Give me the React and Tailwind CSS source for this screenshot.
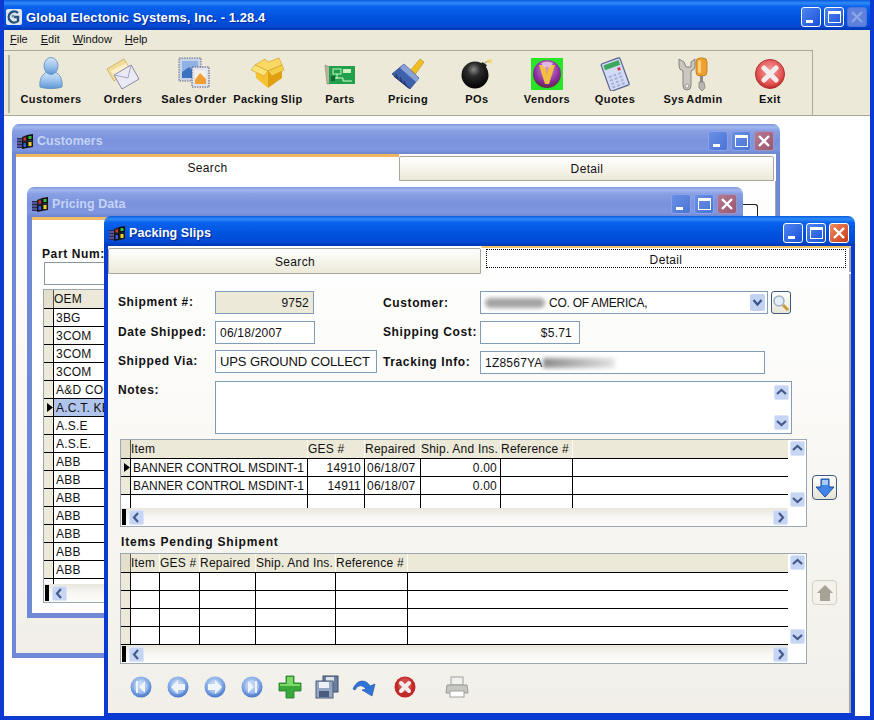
import React from "react";

const ui = "font-['Liberation_Sans',Arial,sans-serif]";

const NavBall = ({ children }) => (
  <svg width="22" height="22" viewBox="0 0 22 22">
    <defs>
      <radialGradient id="navball" cx="45%" cy="35%" r="70%">
        <stop offset="0%" stopColor="#c4d8f5" />
        <stop offset="60%" stopColor="#7ea6e4" />
        <stop offset="100%" stopColor="#3a6cc4" />
      </radialGradient>
    </defs>
    <circle cx="11" cy="11" r="10.5" fill="url(#navball)" />
    <circle cx="11" cy="11" r="7" fill="#dbe6f8" opacity="0.35" />
    {children}
  </svg>
);

const AppIcon = () => (
  <svg width="16" height="16" viewBox="0 0 16 16">
    <rect width="16" height="16" rx="2" fill="#dfe6ee" />
    <path d="M12 4 A5.5 5.5 0 1 0 12 12 L12 8 L8 8" fill="none" stroke="#23507e" strokeWidth="2.4" />
    <circle cx="7" cy="7" r="1.6" fill="#7d95ad" />
  </svg>
);

const WinIcon = () => (
  <svg width="17" height="16" viewBox="0 0 17 16">
    <rect x="0" y="4" width="6" height="10" fill="#2a2a52" />
    <path d="M0 6h6M0 9h6M0 12h6" stroke="#7d80e0" strokeWidth="1" />
    <path d="M5 3 L10 1 L10 7 L5 8 Z" fill="#1c1c1c" />
    <path d="M10 1 L16 0 L16 6 L10 7 Z" fill="#111" />
    <path d="M5 8 L10 7 L10 14 L5 15 Z" fill="#111" />
    <path d="M10 7 L16 6 L16 13 L10 14 Z" fill="#1c1c1c" />
    <rect x="6.5" y="3.5" width="2.5" height="3" fill="#d83030" />
    <rect x="11.5" y="2" width="3" height="3" fill="#30c040" />
    <rect x="6.5" y="9" width="2.5" height="4" fill="#3060e0" />
    <rect x="11.5" y="8" width="3" height="4" fill="#f0d030" />
  </svg>
);

const CustomersIcon = () => (
  <svg width="34" height="34" viewBox="0 0 34 34">
    <defs>
      <linearGradient id="person" x1="0" y1="0" x2="0" y2="1">
        <stop offset="0%" stopColor="#d6e6f8" />
        <stop offset="55%" stopColor="#97c0ea" />
        <stop offset="100%" stopColor="#5f96d4" />
      </linearGradient>
    </defs>
    <path d="M6 30 C5 23 8 17 13 15 L21 15 C26 17 29 23 28 30 C22 32 12 32 6 30 Z" fill="url(#person)" stroke="#5c8cc0" strokeWidth="0.8" />
    <ellipse cx="17" cy="9" rx="7" ry="8.5" fill="url(#person)" stroke="#5c8cc0" strokeWidth="0.8" />
  </svg>
);

const OrdersIcon = () => (
  <svg width="34" height="34" viewBox="0 0 34 34">
    <path d="M1 12 L18 2 L24 12 L8 24 Z" fill="#f3dc9a" stroke="#c8a85a" strokeWidth="0.8" />
    <path d="M5 14 L20 6 L25 14 L11 24 Z" fill="#fbf0c8" />
    <path d="M8 18 L25 8 L33 22 L16 32 Z" fill="#eaeaf4" stroke="#8a88ac" strokeWidth="1" />
    <path d="M8 18 L22 21 L25 8" fill="none" stroke="#a4a2c0" strokeWidth="1" />
  </svg>
);

const SalesIcon = () => (
  <svg width="34" height="34" viewBox="0 0 34 34">
    <rect x="2" y="1" width="22" height="23" fill="#c8d4e6" stroke="#6a6a86" strokeWidth="1" strokeDasharray="1.5 1" />
    <rect x="5" y="4" width="16" height="17" fill="#8fb2e4" />
    <path d="M5 15 L12 10 L21 18 L21 21 L5 21 Z" fill="#3a72c0" />
    <rect x="15" y="10" width="17" height="20" fill="#dfe4ee" stroke="#55557a" strokeWidth="1" strokeDasharray="1.5 1" />
    <rect x="18" y="13" width="11" height="14" fill="#f2f0e6" />
    <path d="M18 23 L23 16 L29 22 L29 27 L18 27 Z" fill="#f0a030" />
  </svg>
);

const PackingIcon = () => (
  <svg width="34" height="34" viewBox="0 0 34 34">
    <path d="M17 14 L31 8 L31 21 L17 31 Z" fill="#e0a010" />
    <path d="M17 14 L4 8 L5 21 L17 31 Z" fill="#f4c232" />
    <path d="M4 8 L14 2 L17 5 L28 1 L31 8 L17 14 Z" fill="#fad864" stroke="#cf9a1a" strokeWidth="0.6" />
    <path d="M4 8 L0 13 L13 19 L17 14 Z" fill="#fde27a" stroke="#cf9a1a" strokeWidth="0.6" />
    <path d="M31 8 L33 13 L21 19 L17 14 Z" fill="#f6cf4a" stroke="#cf9a1a" strokeWidth="0.6" />
  </svg>
);

const PartsIcon = () => (
  <svg width="34" height="34" viewBox="0 0 34 34">
    <path d="M2 8 L4 27 L7 27 L7 10 Z" fill="#b8b4a0" stroke="#7a7660" strokeWidth="0.5" />
    <rect x="6" y="9" width="26" height="18" fill="#21a04c" />
    <rect x="10" y="12" width="8" height="5" fill="none" stroke="#c8f0c0" strokeWidth="1" />
    <rect x="20" y="12" width="8" height="4" fill="#c8f0c0" />
    <path d="M9 21 H20 V24 H29 M14 17 V22" stroke="#d8f8d0" strokeWidth="1" fill="none" />
    <rect x="8" y="19" width="4" height="5" fill="#0d6a30" />
  </svg>
);

const PricingIcon = () => (
  <svg width="34" height="34" viewBox="0 0 34 34">
    <path d="M18 15 L29 2 L33 5 L23 19 Z" fill="#f0c020" stroke="#b88a10" strokeWidth="0.6" />
    <path d="M13 7 L28 21 L19 32 L1 17 Z" fill="#3f60ac" stroke="#2e4788" strokeWidth="0.8" />
    <path d="M13 7 L28 21 L25 25 L9 11 Z" fill="#8ba2d6" />
    <path d="M3 19 L18 31 M5 17 L7 22 M9 20 L11 25 M13 24 L15 29" stroke="#22386e" strokeWidth="1.2" />
  </svg>
);

const BombIcon = () => (
  <svg width="34" height="34" viewBox="0 0 34 34">
    <defs>
      <radialGradient id="bomb" cx="45%" cy="30%" r="70%">
        <stop offset="0%" stopColor="#8a8a8a" />
        <stop offset="35%" stopColor="#2c2c2c" />
        <stop offset="100%" stopColor="#000" />
      </radialGradient>
    </defs>
    <path d="M23 8 Q26 4 30 4" stroke="#c9b98a" strokeWidth="1.6" fill="none" />
    <path d="M30 1 L31 3 L33 3 L31 5 L32 7 L30 6 L28 6 L29 4 Z" fill="#f2d860" />
    <rect x="20" y="6" width="6" height="6" rx="1" transform="rotate(35 23 9)" fill="#222" />
    <circle cx="15" cy="18" r="13.5" fill="url(#bomb)" />
  </svg>
);

const VendorsIcon = () => (
  <svg width="34" height="34" viewBox="0 0 34 34">
    <defs>
      <radialGradient id="vend" cx="50%" cy="35%" r="65%">
        <stop offset="0%" stopColor="#d894d8" />
        <stop offset="70%" stopColor="#8a2a9c" />
        <stop offset="100%" stopColor="#5c2f40" />
      </radialGradient>
    </defs>
    <rect x="1" y="1" width="32" height="32" fill="#26e626" />
    <circle cx="17" cy="17" r="14" fill="url(#vend)" />
    <path d="M9 8 L15 8 L17 17 L19 8 L25 8 L19 27 L15 27 Z" fill="#f2c040" />
    <path d="M11 6 Q17 3 23 6 L20 11 Q17 9 14 11 Z" fill="#e6c4ea" opacity="0.85" />
  </svg>
);

const QuotesIcon = () => (
  <svg width="34" height="34" viewBox="0 0 34 34">
    <g transform="rotate(-20 17 17)">
      <rect x="7" y="3" width="20" height="29" rx="1.5" fill="#d2daf4" stroke="#55628e" strokeWidth="1.2" />
      <rect x="9" y="5" width="16" height="5" fill="#3ca85c" />
      <rect x="21" y="12" width="3" height="3" fill="#d83848" />
      {[0, 1, 2, 3].map((r) =>
        [0, 1, 2].map((c) => (
          <rect key={r + "-" + c} x={10 + c * 5} y={17 + r * 3.6} width="3" height="2" fill="#a4b0dc" />
        ))
      )}
    </g>
  </svg>
);

const SysAdminIcon = () => (
  <svg width="34" height="34" viewBox="0 0 34 34">
    <path d="M3 2 L3 9 Q3 13 7 14 L7 29 Q7 33 11 33 Q15 33 15 29 L15 14 Q19 13 19 9 L19 2 L15 5 L15 10 L10 10 L8 5 Z" fill="#c9c7c0" stroke="#7c7a74" strokeWidth="0.9" />
    <circle cx="11" cy="29" r="2" fill="#f2f0e8" stroke="#7c7a74" strokeWidth="0.7" />
    <rect x="20" y="1" width="11" height="18" rx="4" fill="#f0a030" stroke="#b87818" strokeWidth="0.8" />
    <rect x="22" y="3" width="3" height="13" rx="1.5" fill="#f8d080" />
    <rect x="24" y="19" width="3" height="6" fill="#8c8c8c" />
    <path d="M23 25 H28 L29 31 L26 34 L23 31 Z" fill="#b8b6b0" stroke="#7c7a74" strokeWidth="0.7" />
  </svg>
);

const ExitIcon = () => (
  <svg width="34" height="34" viewBox="0 0 34 34">
    <defs>
      <radialGradient id="exitball" cx="50%" cy="40%" r="60%">
        <stop offset="0%" stopColor="#f5a5a5" />
        <stop offset="75%" stopColor="#e45050" />
        <stop offset="100%" stopColor="#b82a2a" />
      </radialGradient>
    </defs>
    <circle cx="17" cy="17" r="14.5" fill="url(#exitball)" stroke="#b03030" strokeWidth="1" />
    <path d="M11 11 L23 23 M23 11 L11 23" stroke="#f4ecec" strokeWidth="5" strokeLinecap="round" />
  </svg>
);

const toolbar = [
  { label: "Customers", width: "w-[74px]", Icon: CustomersIcon },
  { label: "Orders", width: "w-[70px]", Icon: OrdersIcon },
  { label: "Sales Order", width: "w-[72px]", Icon: SalesIcon },
  { label: "Packing Slip", width: "w-[76px]", Icon: PackingIcon },
  { label: "Parts", width: "w-[68px]", Icon: PartsIcon },
  { label: "Pricing", width: "w-[68px]", Icon: PricingIcon },
  { label: "POs", width: "w-[70px]", Icon: BombIcon },
  { label: "Vendors", width: "w-[70px]", Icon: VendorsIcon },
  { label: "Quotes", width: "w-[66px]", Icon: QuotesIcon },
  { label: "Sys Admin", width: "w-[90px]", Icon: SysAdminIcon },
  { label: "Exit", width: "w-[64px]", Icon: ExitIcon },
];

const WinBtn = ({ kind, state }) => {
  const tone = {
    active: "border-white bg-gradient-to-br from-[#4f86f2] to-[#1a4fd6]",
    inactive: "border-[#8aa2e8] bg-gradient-to-br from-[#6a90e4] to-[#4a74d6]",
    activeClose: "border-white bg-gradient-to-br from-[#ee8a62] to-[#c9380f]",
    inactiveClose: "border-[#9f93c0] bg-gradient-to-br from-[#b57a92] to-[#9a5670]",
    disabledClose: "border-[#4f74dc] bg-[#5f80dc]",
  }[kind === "close" ? (state === "active" ? "activeClose" : state === "disabled" ? "disabledClose" : "inactiveClose") : state === "inactive" ? "inactive" : "active"];
  return (
    <div className={`relative flex h-[20px] w-[20px] items-center justify-center rounded-[3px] border ${tone}`}>
      {kind === "min" && <div className="absolute bottom-[3px] left-[4px] h-[3px] w-[7px] bg-white" />}
      {kind === "max" && <div className="h-[12px] w-[13px] border border-t-[3px] border-white" />}
      {kind === "close" && (
        <svg width="14" height="14" viewBox="0 0 14 14">
          <path d="M2 2 L12 12 M12 2 L2 12" stroke={state === "disabled" ? "#8da6e6" : "white"} strokeWidth="2.4" />
        </svg>
      )}
    </div>
  );
};

const TitleBar = ({ title, active, closeState, rounded = true, big, icon }) => (
  <div
    className={`flex h-[30px] shrink-0 items-center pt-[3px] ${rounded ? "rounded-t-[7px]" : ""} ${
      active
        ? "bg-[linear-gradient(180deg,#0a5ae0_0%,#2f8bf6_10%,#0a62ec_22%,#0053e0_55%,#004ad6_85%,#0038b4_100%)]"
        : "bg-[linear-gradient(180deg,#7e96dc_0%,#a2b7ee_10%,#8aa0e4_22%,#7a92dc_55%,#7f97e0_85%,#6d84d0_100%)]"
    }`}
  >
    <div className={big ? "ml-[6px] mr-[4px] flex" : "ml-[5px] mr-[3px] flex pt-[2px]"}>{icon || <WinIcon />}</div>
    <span
      className={`flex-1 pt-[2px] font-bold ${big ? "text-[13px] tracking-[0.08px]" : "text-[12.5px] tracking-[0.05px]"} ${
        active ? "text-white [text-shadow:1px_1px_1px_#0a2a90]" : "text-[#c5d4f6]"
      }`}
    >
      {title}
    </span>
    <div className={`flex gap-[3px] ${big ? "mr-[7px]" : "mr-[6px]"}`}>
      <WinBtn kind="min" state={active ? "active" : "inactive"} />
      <WinBtn kind="max" state={active ? "active" : "inactive"} />
      <WinBtn kind="close" state={closeState || (active ? "active" : "inactive")} />
    </div>
  </div>
);

const ScrollBtn = ({ dir }) => {
  const pts = {
    up: "3,9 7.5,5 12,9",
    down: "3,6 7.5,10 12,6",
    left: "9,3 5,7.5 9,12",
    right: "6,3 10,7.5 6,12",
  }[dir];
  return (
    <svg width="15" height="15" viewBox="0 0 15 15" className="block shrink-0">
      <rect x="0.5" y="0.5" width="14" height="14" rx="1.5" fill="#c6d5f4" stroke="#dbe5f8" />
      <polyline points={pts} fill="none" stroke="#44598c" strokeWidth="2.2" />
    </svg>
  );
};

const Cell = ({ width, last, right, className = "", children }) => (
  <div
    className={`${width} ${last ? "flex-1" : "shrink-0 border-r border-black"} ${
      right ? "pr-[3px] text-right" : "pl-[2px]"
    } overflow-hidden whitespace-nowrap leading-[18px] ${className}`}
  >
    {children}
  </div>
);

const Grid = ({ cols, header, rows, stub, width, pointer, selected, vscroll = true }) => (
  <div className={`flex shrink-0 flex-col border border-[#9ba8b2] bg-white text-[12px] tracking-[0.22px] text-[#111] ${width}`}>
    <div className="flex">
      <div className="flex min-w-0 flex-1 flex-col">
        <div className="flex h-[19px] border-b border-black bg-[#ece9d8]">
          <div className="w-[10px] shrink-0 border-r border-[#57533f] bg-[#e3dfcc]" />
          {cols.map((w, i) => (
            <div key={i} className={`${w} shrink-0 overflow-hidden whitespace-nowrap border-r border-[#fbfaf3] leading-[18px]`}>
              {header[i]}
            </div>
          ))}
        </div>
        {rows.map((row, r) => (
          <div key={r} className="flex h-[18px] border-b border-black">
            <div className="flex w-[10px] shrink-0 items-center justify-end border-r border-black bg-[#ece9d8]">
              {pointer === r && (
                <svg width="6" height="9" viewBox="0 0 6 9">
                  <path d="M0 0 L6 4.5 L0 9 Z" fill="#000" />
                </svg>
              )}
            </div>
            {cols.map((w, i) => (
              <Cell key={i} width={w} right={row[i] && row[i].right} className={selected === r ? "bg-[#b0c4ec]" : ""}>
                {row[i] ? row[i].text || row[i] : ""}
              </Cell>
            ))}
            <Cell last width="" className={selected === r ? "bg-[#b0c4ec]" : ""} />
          </div>
        ))}
        {stub > 0 && (
          <div className="flex" style={{ height: stub }}>
            <div className="w-[10px] shrink-0 border-r border-black" />
            {cols.map((w, i) => (
              <div key={i} className={`${w} shrink-0 border-r border-black`} />
            ))}
          </div>
        )}
      </div>
      {vscroll && (
        <div className="flex w-[18px] shrink-0 flex-col items-center justify-between bg-white py-px">
          <ScrollBtn dir="up" />
          <ScrollBtn dir="down" />
        </div>
      )}
    </div>
    <div className="flex h-[18px]">
      <div className="flex flex-1 items-center bg-gradient-to-b from-[#e8e6dc] via-[#f8f7f3] to-[#fdfdfb]">
        <div className="ml-px mr-[3px] h-[16px] w-[4px] bg-black" />
        <ScrollBtn dir="left" />
        <div className="flex-1" />
        <ScrollBtn dir="right" />
      </div>
      {vscroll && <div className="w-[18px] shrink-0" />}
    </div>
  </div>
);

const Field = ({ width, className = "", children }) => (
  <div className={`flex h-[23px] shrink-0 items-center overflow-hidden whitespace-nowrap border border-[#7f9db9] bg-white px-[4px] pt-px text-[12px] tracking-[0.22px] text-[#111] ${width} ${className}`}>
    {children}
  </div>
);

const Label = ({ className = "", children }) => (
  <div className={`shrink-0 text-[12px] font-bold tracking-[0.62px] text-[#111] ${className}`}>{children}</div>
);

const FormRow = ({ className = "", children }) => <div className={`flex h-[23px] items-center pl-[10px] ${className}`}>{children}</div>;

const SideBtn = ({ disabled, className = "", children }) => (
  <div
    className={`flex h-[25px] w-[25px] shrink-0 items-center justify-center rounded-[4px] border ${
      disabled ? "border-[#d4d0c2] bg-[#f4f2ea]" : "border-[#3d5c7c] bg-gradient-to-b from-white to-[#e6e3d4]"
    } ${className}`}
  >
    {children}
  </div>
);

const banner = <span className="tracking-normal">BANNER CONTROL MSDINT-1</span>;

const pricingRows = ["3BG", "3COM", "3COM", "3COM", "A&D CO.", "A.C.T. KEYS", "A.S.E", "A.S.E.", "ABB", "ABB", "ABB", "ABB", "ABB", "ABB", "ABB"].map((t) => [t]);

const frameActive = "border-[#0a3ad2]";
const frameInactive = "border-[#7089d6]";

const PackingSlips = () => (
  <div className="absolute left-[100px] top-[100px] flex h-[503px] w-[751px] flex-col">
    <TitleBar title="Packing Slips" active />
    <div className={`flex min-h-0 flex-1 flex-col border-x-4 border-b-[6px] ${frameActive} bg-gradient-to-b from-white to-[#f1efe8]`}>
      <div className="flex h-[28px] shrink-0 text-[12px] tracking-[0.35px] text-[#111]">
        <div className="mt-[2px] flex h-[26px] w-[373px] items-center justify-center rounded-t-[2px] border border-[#a9a89e] bg-gradient-to-b from-white to-[#ece9d8] pl-[1px] pt-[2px]">
          Search
        </div>
        <div className="flex h-[26px] flex-1 flex-col rounded-t-[2px] border-r-2 border-t-2 border-r-[#a8a8a0] border-t-[#f2c566] bg-white pt-px">
          <div className="ml-[5px] mr-[3px] flex h-[19px] items-center justify-center border border-dotted border-black pt-[2px]">Detail</div>
        </div>
      </div>
      <div className="flex min-h-0 flex-1 flex-col border-r-2 border-[#a8a8a0]">
        <FormRow className="mt-[17px]">
          <Label className="mb-[2px] w-[97px]">Shipment #:</Label>
          <Field width="w-[99px]" className="justify-end !bg-[#ece9d8]">9752</Field>
          <Label className="ml-[69px] w-[97px]">Customer:</Label>
          <Field width="w-[288px]" className="relative">
            <div className="h-[10px] w-[60px] rounded-full bg-[#a3a3a3] blur-[2px]" />
            <span className="ml-[4px] tracking-[-0.25px]">CO. OF AMERICA,</span>
            <div className="absolute right-[2px] top-[2px] flex h-[17px] w-[15px] items-center justify-center rounded-[2px] bg-[#c4d2f2]">
              <svg width="11" height="9" viewBox="0 0 11 9">
                <polyline points="1.5,2 5.5,6.5 9.5,2" fill="none" stroke="#3a5488" strokeWidth="2.2" />
              </svg>
            </div>
          </Field>
          <div className="ml-[3px] flex h-[23px] w-[20px] items-center justify-center rounded-[3px] border border-[#3d5c7c] bg-gradient-to-b from-white to-[#e8e5d8]">
            <svg width="18" height="18" viewBox="0 0 18 18">
              <circle cx="7" cy="7" r="5" fill="#e6eefa" stroke="#9bb0c8" strokeWidth="1.4" />
              <path d="M11 11 L16 16" stroke="#c99a3a" strokeWidth="3" />
            </svg>
          </div>
        </FormRow>
        <FormRow className="mt-[7px]">
          <Label className="mb-[2px] w-[97px]">Date Shipped:</Label>
          <Field width="w-[100px]">06/18/2007</Field>
          <Label className="mb-[2px] ml-[68px] w-[97px]">Shipping Cost:</Label>
          <Field width="w-[100px]" className="justify-end !pr-[7px]">$5.71</Field>
        </FormRow>
        <FormRow className="mt-[6px]">
          <Label className="mb-[2px] w-[97px]">Shipped Via:</Label>
          <Field width="w-[162px]" className="!text-[13px] !tracking-[-0.1px]">UPS GROUND COLLECT</Field>
          <Label className="ml-[6px] w-[97px]">Tracking Info:</Label>
          <Field width="w-[285px]" className="mt-[2px]">
            1Z8567YA
            <div className="h-[10px] w-[72px] bg-gradient-to-r from-[#8c8c8c] to-[#e4e4e4] blur-[2px]" />
          </Field>
        </FormRow>
        <div className="mt-[8px] flex h-[53px] shrink-0 pl-[10px]">
          <Label className="w-[97px]">Notes:</Label>
          <div className="flex w-[577px] flex-col items-end justify-between border border-[#7f9db9] bg-white py-[3px] pr-[2px]">
            <ScrollBtn dir="up" />
            <ScrollBtn dir="down" />
          </div>
        </div>
        <div className="ml-[12px] mt-[5px] flex gap-[5px]">
          <Grid
            width="w-[687px]"
            cols={["w-[177px]", "w-[57px]", "w-[56px]", "w-[80px]", "w-[72px]"]}
            header={["Item", "GES #", "Repaired", "Ship. And Ins.", "Reference #"]}
            rows={[
              [banner, { text: "14910", right: true }, "06/18/07", { text: "0.00", right: true }, ""],
              [banner, { text: "14911", right: true }, "06/18/07", { text: "0.00", right: true }, ""],
            ]}
            stub={13}
            pointer={0}
          />
          <SideBtn className="mt-[36px]">
            <svg width="20" height="20" viewBox="0 0 20 20">
              <path d="M6 1 H14 V9 H19 L10 19 L1 9 H6 Z" fill="#3f86e8" stroke="#1f4f9c" strokeWidth="1" />
              <path d="M7 2 H13 V7 H7 Z" fill="#a8ccf6" />
            </svg>
          </SideBtn>
        </div>
        <Label className="ml-[13px] mt-[7px] h-[19px] leading-[16px] !tracking-[0.8px]">Items Pending Shipment</Label>
        <div className="ml-[12px] flex gap-[5px]">
          <Grid
            width="w-[687px]"
            cols={["w-[29px]", "w-[40px]", "w-[56px]", "w-[80px]", "w-[72px]"]}
            header={["Item", "GES #", "Repaired", "Ship. And Ins.", "Reference #"]}
            rows={[[], [], [], []]}
            stub={0}
          />
          <SideBtn disabled className="mt-[27px]">
            <svg width="18" height="18" viewBox="0 0 18 18">
              <path d="M9 1 L17 9 H14 V17 H4 V9 H1 Z" fill="#a8a296" />
            </svg>
          </SideBtn>
        </div>
        <div className="ml-[22px] mt-[11px] flex items-center">
          <NavBall>
            <path d="M15 5 V17 L9 11 Z M8 5 V17 H6 V5 Z" fill="#f0f4fb" />
          </NavBall>
          <div className="ml-[15px]">
            <NavBall>
              <path d="M11 4 L4 11 L11 18 V14 H18 V8 H11 Z" fill="#f0f4fb" />
            </NavBall>
          </div>
          <div className="ml-[15px]">
            <NavBall>
              <path d="M11 4 L18 11 L11 18 V14 H4 V8 H11 Z" fill="#f0f4fb" />
            </NavBall>
          </div>
          <div className="ml-[15px]">
            <NavBall>
              <path d="M7 5 V17 L13 11 Z M14 5 V17 H16 V5 Z" fill="#f0f4fb" />
            </NavBall>
          </div>
          <div className="ml-[15px]">
            <svg width="24" height="24" viewBox="0 0 24 24">
              <path d="M8 1 H16 V8 H23 V16 H16 V23 H8 V16 H1 V8 H8 Z" fill="#3aa83a" stroke="#1c7a24" strokeWidth="0.8" />
              <path d="M9 2 H15 V9 H22 V11 H2 V9 H9 Z" fill="#7ed868" />
            </svg>
          </div>
          <div className="ml-[13px]">
            <svg width="24" height="24" viewBox="0 0 24 24">
              <rect x="8" y="1" width="15" height="16" fill="#6a7e9e" stroke="#3e4e6c" />
              <rect x="11" y="2" width="8" height="5" fill="#dfe5ee" />
              <rect x="1" y="6" width="17" height="17" fill="#93a6c4" stroke="#4c5c7c" />
              <rect x="4" y="7" width="10" height="6" fill="#eef1f6" />
              <rect x="4" y="16" width="10" height="6" fill="#4c5c7c" />
            </svg>
          </div>
          <div className="ml-[13px]">
            <svg width="24" height="22" viewBox="0 0 24 22">
              <path d="M1 13 C5 3 14 3 18 10 L23 8 L20 20 L10 14 L14 13 C11 9 6 8 3 14 Z" fill="#2f74d6" stroke="#1c4a9c" strokeWidth="0.6" />
            </svg>
          </div>
          <div className="ml-[18px]">
            <svg width="22" height="22" viewBox="0 0 22 22">
              <circle cx="11" cy="11" r="10.5" fill="#c22a2a" />
              <circle cx="11" cy="9" r="7" fill="#e06060" opacity="0.6" />
              <path d="M7 7 L15 15 M15 7 L7 15" stroke="#f4ecec" strokeWidth="4" strokeLinecap="round" />
            </svg>
          </div>
          <div className="ml-[29px]">
            <svg width="24" height="22" viewBox="0 0 24 22">
              <rect x="6" y="1" width="12" height="8" fill="#f0f0ee" stroke="#a0a09c" />
              <path d="M2 9 H22 L23 17 H1 Z" fill="#c6c6c2" stroke="#9a9a96" />
              <rect x="5" y="15" width="14" height="6" fill="#fff" stroke="#a0a09c" />
            </svg>
          </div>
        </div>
      </div>
    </div>
  </div>
);

const PricingData = () => (
  <div className="absolute left-[23px] top-[71px] flex h-[431px] w-[716px] flex-col">
    <TitleBar title="Pricing Data" />
    <div className={`flex min-h-0 flex-1 flex-col border-x-[5px] border-b-[5px] ${frameInactive} bg-white`}>
      <div className="h-[3px] shrink-0 bg-[#f0bd68]" />
      <Label className="ml-[10px] mt-[26px] leading-[16px]">Part Num:</Label>
      <div className="ml-[12px] h-[23px] w-[200px] shrink-0 border border-[#8a97a3] bg-white" />
      <div className="ml-[11px] mt-[4px]">
        <Grid
          width="w-[688px]"
          cols={["w-[120px]"]}
          header={["OEM"]}
          rows={pricingRows}
          stub={5}
          pointer={5}
          selected={5}
          vscroll={false}
        />
      </div>
    </div>
  </div>
);

const Customers = () => (
  <div className="absolute left-[8px] top-[8px] flex h-[534px] w-[768px] flex-col">
    <TitleBar title="Customers" />
    <div className={`flex min-h-0 flex-1 flex-col border-x-4 border-b-[5px] ${frameInactive} bg-gradient-to-b from-white to-[#f1efe8]`}>
      <div className="flex h-[27px] shrink-0 text-[12px] tracking-[0.35px] text-[#111]">
        <div className="flex h-[27px] w-[383px] items-center justify-center border-t-[3px] border-[#efb85e] bg-white pb-[3px]">Search</div>
        <div className="mt-[2px] flex h-[25px] w-[375px] items-center justify-center rounded-t-[2px] border border-[#a9a89e] bg-gradient-to-b from-white to-[#ece9d8] pl-[1px]">
          Detail
        </div>
      </div>
      <div className="relative flex-1 border-r border-[#a8a8a0]">
        <div className="absolute left-[700px] top-[23px] h-[40px] w-[42px] rounded-tr-[3px] border-r border-t border-[#222]" />
      </div>
    </div>
  </div>
);

const Main = () => (
  <div className={`flex h-[720px] w-[874px] flex-col overflow-hidden border-x-4 border-b-4 border-[#0a3ad2] ${ui}`}>
    <div className="-mx-[4px]">
      <TitleBar title="Global Electonic Systems, Inc. - 1.28.4" active closeState="disabled" rounded={false} big icon={<AppIcon />} />
    </div>
    <div className="flex h-[20px] shrink-0 items-center gap-[13px] bg-[#ece9d8] pb-[2px] pl-[6px] text-[11px] text-[#111]">
      <span><u>F</u>ile</span>
      <span><u>E</u>dit</span>
      <span><u>W</u>indow</span>
      <span><u>H</u>elp</span>
    </div>
    <div className="flex h-[66px] shrink-0 border-b border-[#aca899] bg-[#ece9d8]">
      <div className="flex w-[809px] shrink-0 border-r border-t border-[#aca899]">
        <div className="ml-[4px] mt-[4px] h-[58px] w-[2px] bg-[#b6b3a3]" />
        <div className="ml-[4px] flex">
          {toolbar.map(({ label, width, Icon }) => (
            <div key={label} className={`flex flex-col items-center pt-[6px] ${width}`}>
              <Icon />
              <div className="mt-px whitespace-nowrap text-[11px] font-bold leading-[14px] tracking-[0.42px] text-[#111] [word-spacing:-1px]">{label}</div>
            </div>
          ))}
        </div>
      </div>
    </div>
    <div className="relative min-h-0 flex-1 bg-white">
      <Customers />
      <PricingData />
      <PackingSlips />
    </div>
  </div>
);

export default function App() {
  return <Main />;
}
